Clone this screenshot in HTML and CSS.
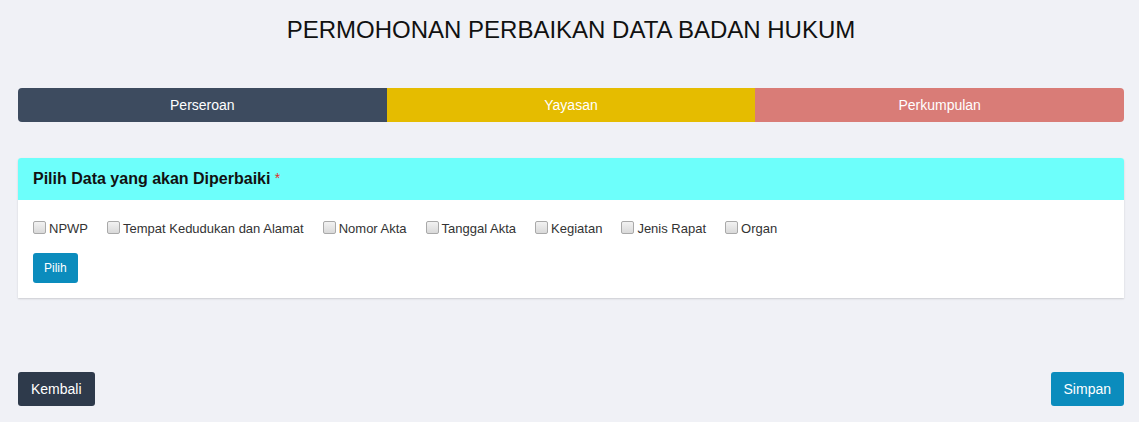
FILE: index.html
```html
<!DOCTYPE html>
<html lang="id">
<head>
<meta charset="utf-8">
<title>Permohonan Perbaikan Data Badan Hukum</title>
<link rel="stylesheet" href="styles.css">
</head>
<body>
<main class="page">
  <h1 class="title">PERMOHONAN PERBAIKAN DATA BADAN HUKUM</h1>

  <nav class="tabs">
    <div class="tab tab-perseroan">Perseroan</div>
    <div class="tab tab-yayasan">Yayasan</div>
    <div class="tab tab-perkumpulan">Perkumpulan</div>
  </nav>

  <section class="card">
    <header class="card-header">
      <h2 class="card-title">Pilih Data yang akan Diperbaiki <span class="req">*</span></h2>
    </header>
    <div class="card-body">
      <div class="checks">
        <label class="check"><input type="checkbox"><span>NPWP</span></label>
        <label class="check"><input type="checkbox"><span>Tempat Kedudukan dan Alamat</span></label>
        <label class="check"><input type="checkbox"><span>Nomor Akta</span></label>
        <label class="check"><input type="checkbox"><span>Tanggal Akta</span></label>
        <label class="check"><input type="checkbox"><span>Kegiatan</span></label>
        <label class="check"><input type="checkbox"><span>Jenis Rapat</span></label>
        <label class="check"><input type="checkbox"><span>Organ</span></label>
      </div>
      <button class="btn btn-blue btn-sm" type="button">Pilih</button>
    </div>
  </section>

  <footer class="actions">
    <button class="btn btn-dark" type="button">Kembali</button>
    <button class="btn btn-blue" type="button">Simpan</button>
  </footer>
</main>
</body>
</html>
```

FILE: styles.css
```css
* { box-sizing: border-box; }

html, body {
  margin: 0;
  padding: 0;
  background: #f0f1f6;
  font-family: "Liberation Sans", Arial, sans-serif;
  color: #333;
}

.page {
  padding: 0 15px 0 18px;
  display: flex;
  flex-direction: column;
}

.title {
  margin: 17px 0 0;
  font-size: 24px;
  line-height: 26px;
  font-weight: normal;
  text-align: center;
  color: #111;
}

.tabs {
  margin-top: 45px;
  display: grid;
  grid-template-columns: 1fr 1fr 1fr;
  height: 34px;
  border-radius: 4px;
  overflow: hidden;
}

.tab {
  display: flex;
  align-items: center;
  justify-content: center;
  color: #fff;
  font-size: 14px;
}

.tab-perseroan { background: #3d4b5f; }
.tab-yayasan { background: #e5bc00; }
.tab-perkumpulan { background: #d97c77; }

.card {
  margin-top: 36px;
  background: #fff;
  border-radius: 3px 3px 0 0;
  box-shadow: 0 1px 2px rgba(0, 0, 0, 0.15);
}

.card-header {
  height: 42px;
  background: #6dfffb;
  border-radius: 3px 3px 0 0;
  display: flex;
  align-items: center;
  padding: 0 15px;
}

.card-title {
  margin: 0;
  font-size: 16px;
  font-weight: bold;
  color: #111;
}

.req {
  color: #e0302b;
  font-weight: normal;
  font-size: 14px;
  vertical-align: 1px;
}

.card-body {
  padding: 19px 15px 15px;
  display: flex;
  flex-direction: column;
  align-items: flex-start;
}

.checks {
  display: flex;
  align-items: center;
  gap: 19px;
  height: 20px;
}

.check {
  display: flex;
  align-items: center;
  gap: 3px;
  font-size: 13px;
  line-height: 20px;
  color: #333;
}

.check input {
  appearance: none;
  -webkit-appearance: none;
  margin: 0 0 3px;
  width: 13px;
  height: 13px;
  border: 1px solid #a9a9a9;
  border-radius: 2px;
  background: linear-gradient(#f2f2f2, #d9d9d9);
}

.btn {
  border: none;
  color: #fff;
  font-family: "Liberation Sans", Arial, sans-serif;
  font-size: 14px;
  height: 34px;
  padding: 0 13px;
  border-radius: 3px;
  cursor: pointer;
}

.btn-sm {
  margin-top: 14px;
  height: 30px;
  padding: 0 11px;
  font-size: 12px;
}

.btn-blue { background: #0b8cbd; }
.btn-dark { background: #2e3a4b; }

.actions {
  margin-top: 74px;
  display: flex;
  justify-content: space-between;
}
```
